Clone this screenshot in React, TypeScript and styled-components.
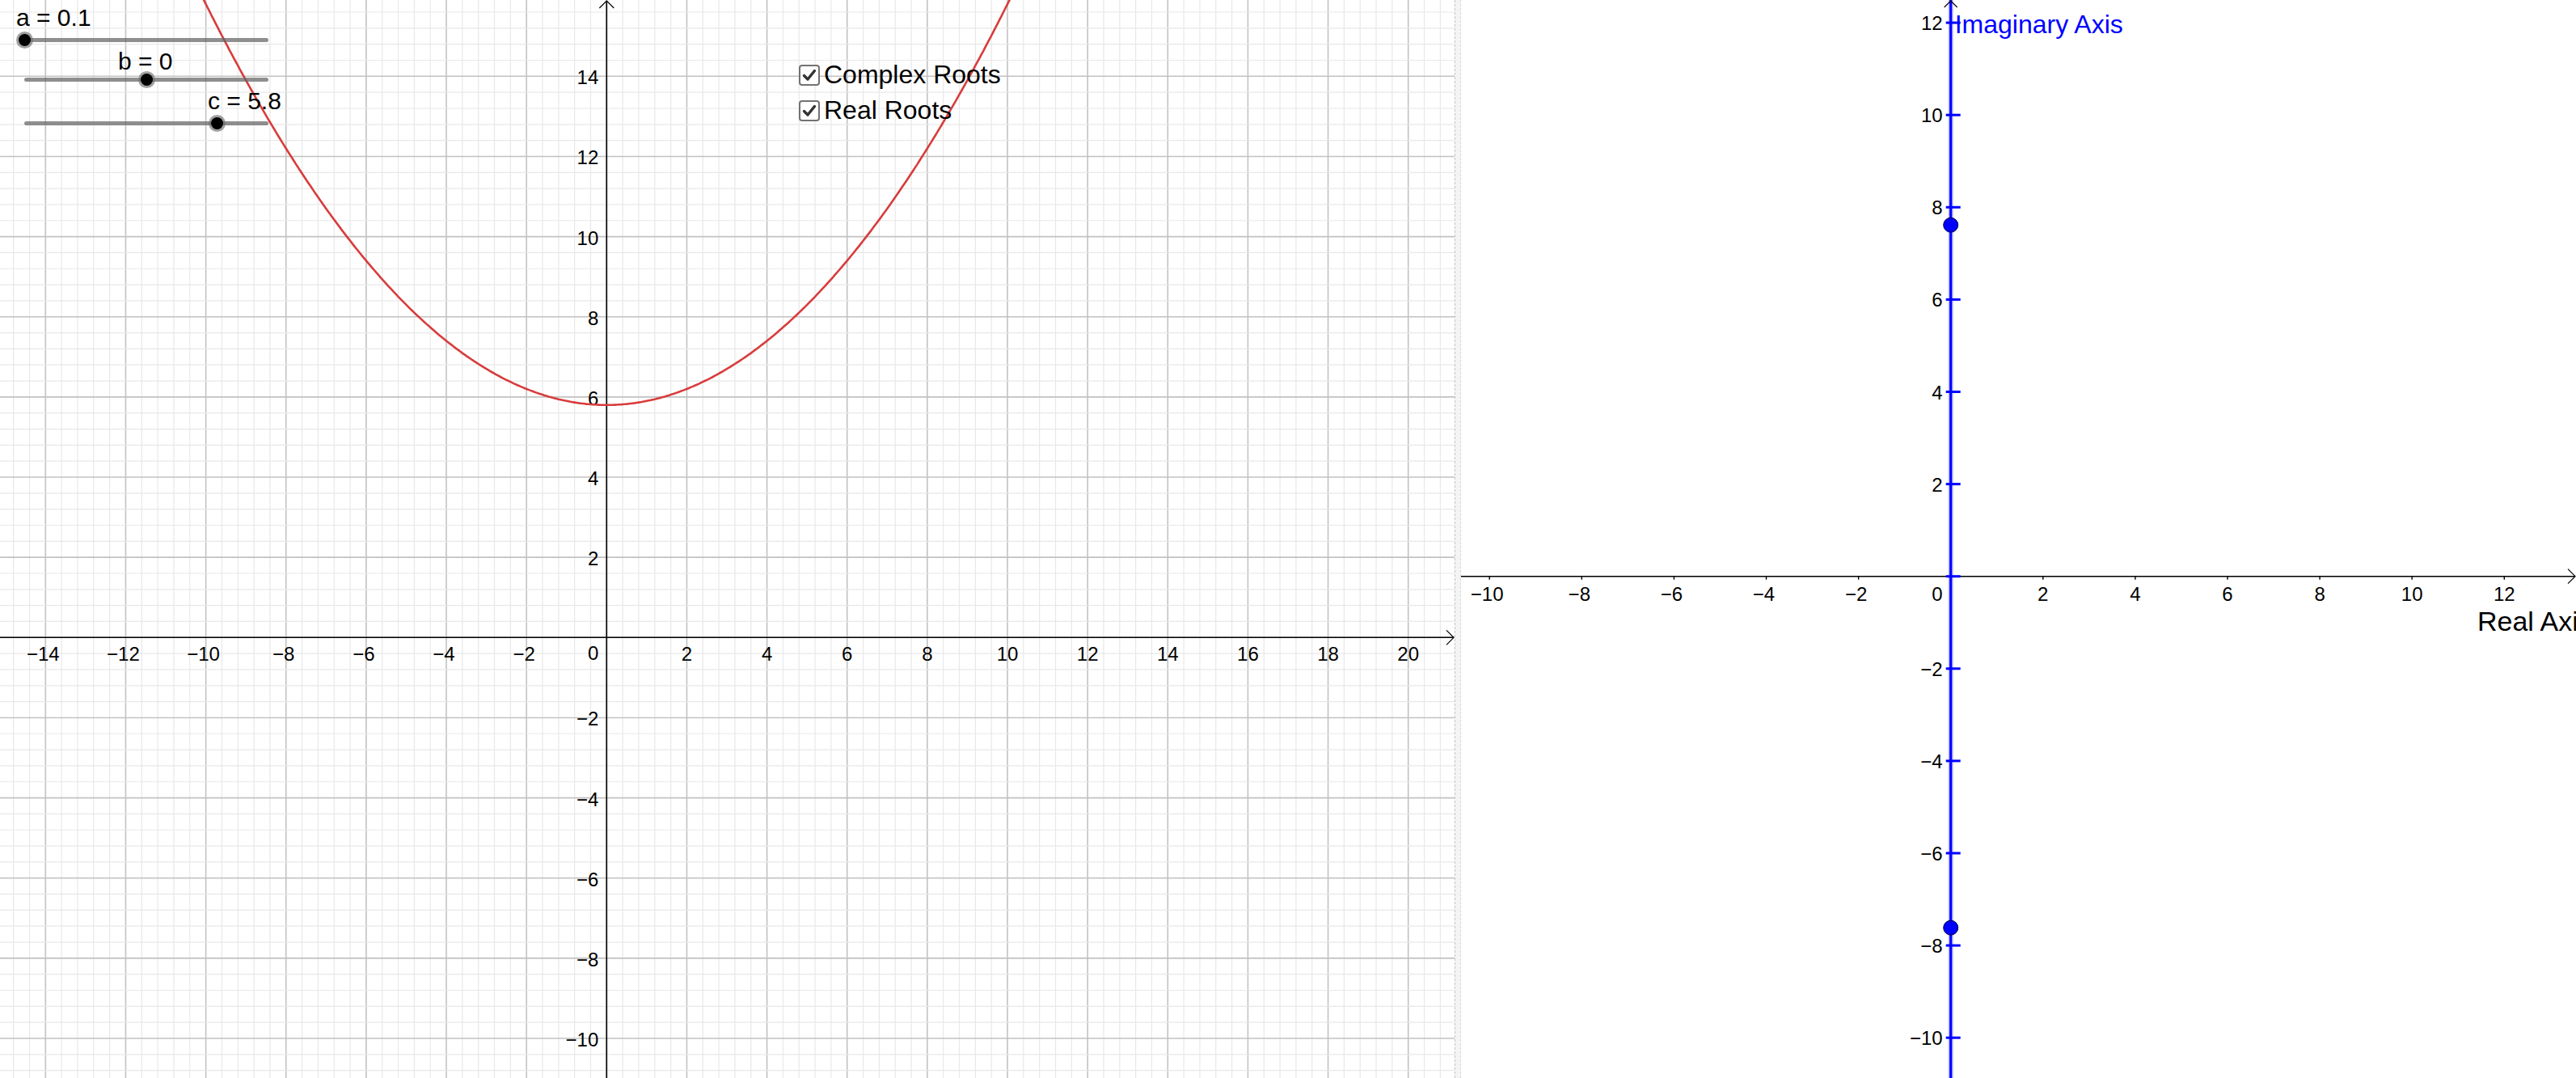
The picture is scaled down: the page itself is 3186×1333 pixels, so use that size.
import React from 'react';
import styled, { createGlobalStyle } from 'styled-components';

const GlobalStyle = createGlobalStyle`
  html, body {
    margin: 0;
    padding: 0;
    background: #fff;
  }
  body {
    font-family: "Liberation Sans", Arial, sans-serif;
    overflow: hidden;
  }
`;

const Page = styled.div`
  display: flex;
  width: 3186px;
  height: 1333px;
  overflow: hidden;
`;

const GraphPanel = styled.div<{ $width?: number }>`
  position: relative;
  flex: ${(p) => (p.$width ? `0 0 ${p.$width}px` : '1 1 auto')};
  height: 100%;
  overflow: hidden;
  background: #fff;
`;

const Divider = styled.div`
  flex: 0 0 6px;
  background: #f4f4f4;
  border-left: 1px dashed #c4c4c4;
  border-right: 1px dashed #d8d8d8;
`;

const Canvas = styled.svg`
  display: block;
  font-family: "Liberation Sans", Arial, sans-serif;
`;

const SliderWrap = styled.div<{ $top: number }>`
  position: absolute;
  left: 30px;
  top: ${(p) => p.$top - 2}px;
  width: 302px;
  height: 5px;
`;

const Track = styled.div`
  height: 5px;
  border-radius: 3px;
  background: rgba(100, 100, 100, 0.72);
`;

const Knob = styled.span`
  position: absolute;
  top: 50%;
  width: 21px;
  height: 21px;
  margin: -10.5px 0 0 -10.5px;
  border-radius: 50%;
  background: rgba(110, 110, 110, 0.65);

  &::after {
    content: '';
    position: absolute;
    inset: 3px;
    border-radius: 50%;
    background: #000;
  }
`;

const SliderLabel = styled.div<{ $left: number; $baseline: number }>`
  position: absolute;
  left: ${(p) => p.$left}px;
  top: ${(p) => p.$baseline - 26}px;
  font-size: 30px;
  line-height: 30px;
  color: #000;
  white-space: nowrap;
`;

const CheckList = styled.div`
  position: absolute;
  left: 988px;
  top: 79px;
  display: flex;
  flex-direction: column;
  gap: 17px;
`;

const CheckRow = styled.label`
  display: flex;
  align-items: center;
  gap: 5px;
  height: 27px;
  font-size: 32px;
  color: #000;
  white-space: nowrap;
`;

const CheckBox = styled.span`
  box-sizing: border-box;
  width: 26px;
  height: 26px;
  border: 2px solid #727272;
  border-radius: 4px;
  background: #fff;
  display: flex;
  align-items: center;
  justify-content: center;
`;

const L = { ox: 750.3, oy: 788.3, s: 49.57, w: 1799, h: 1333 };
const R = { ox: 605.7, oy: 712.7, s: 57.05, w: 1379, h: 1333 };

const fmt = (n: number) => (n < 0 ? `\u2212${Math.abs(n)}` : `${n}`);
const range = (a: number, b: number, step = 1) => {
  const out: number[] = [];
  for (let i = a; i <= b; i += step) out.push(i);
  return out;
};

const Slider: React.FC<{ top: number; value: number; min: number; max: number; label: string; labelX: number; labelY: number }> = ({
  top,
  value,
  min,
  max,
  label,
  labelX,
  labelY,
}) => (
  <>
    <SliderLabel $left={labelX} $baseline={labelY}>
      {label}
    </SliderLabel>
    <SliderWrap $top={top}>
      <Track />
      <Knob style={{ left: `${((value - min) / (max - min)) * 100}%` }} />
    </SliderWrap>
  </>
);

const Check: React.FC<{ label: string }> = ({ label }) => (
  <CheckRow>
    <CheckBox>
      <svg width="18" height="18" viewBox="0 0 18 18">
        <path d="M2.5 9.5 L7 14 L15.5 3.5" fill="none" stroke="#333" strokeWidth="3.4" strokeLinecap="round" strokeLinejoin="round" />
      </svg>
    </CheckBox>
    {label}
  </CheckRow>
);

const LeftGraph = () => {
  const minor = L.s * 0.4;
  const xs = range(Math.ceil(-L.ox / minor), Math.floor((L.w - L.ox) / minor));
  const ys = range(Math.ceil((L.oy - L.h) / minor), Math.floor(L.oy / minor));
  const pts: string[] = [];
  for (let x = -10.7; x <= 10.7; x += 0.05) {
    pts.push(`${(L.ox + x * L.s).toFixed(1)},${(L.oy - (0.1 * x * x + 5.8) * L.s).toFixed(1)}`);
  }
  return (
    <Canvas width={L.w} height={L.h}>
      {xs.map((k) => (
        <line
          key={`gx${k}`}
          x1={L.ox + k * minor}
          x2={L.ox + k * minor}
          y1={0}
          y2={L.h}
          stroke={k % 5 === 0 ? '#c2c2c2' : '#e8e8e8'}
          strokeWidth={k % 5 === 0 ? 1.6 : 1.2}
        />
      ))}
      {ys.map((k) => (
        <line
          key={`gy${k}`}
          y1={L.oy - k * minor}
          y2={L.oy - k * minor}
          x1={0}
          x2={L.w}
          stroke={k % 5 === 0 ? '#c2c2c2' : '#e8e8e8'}
          strokeWidth={k % 5 === 0 ? 1.6 : 1.2}
        />
      ))}
      <line x1={0} x2={L.w - 1} y1={L.oy} y2={L.oy} stroke="#000" strokeWidth={1.6} />
      <line x1={L.ox} x2={L.ox} y1={1} y2={L.h} stroke="#000" strokeWidth={1.6} />
      <polyline points={`${L.w - 10},${L.oy - 9} ${L.w - 1},${L.oy} ${L.w - 10},${L.oy + 9}`} fill="none" stroke="#000" strokeWidth={1.2} />
      <polyline points={`${L.ox - 9},${10} ${L.ox},${1} ${L.ox + 9},${10}`} fill="none" stroke="#000" strokeWidth={1.2} />
      <g fontSize={24} fill="#000">
        {range(-14, 20, 2)
          .filter((n) => n !== 0)
          .map((n) => (
            <text key={`lx${n}`} x={L.ox + n * L.s - (n < 0 ? 3 : 0)} y={L.oy + 29} textAnchor="middle">
              {fmt(n)}
            </text>
          ))}
        {range(-10, 14, 2)
          .filter((n) => n !== 0)
          .map((n) => (
            <text key={`ly${n}`} x={L.ox - 10} y={L.oy - n * L.s + 10} textAnchor="end">
              {fmt(n)}
            </text>
          ))}
        <text x={L.ox - 10} y={L.oy + 28} textAnchor="end">
          0
        </text>
      </g>
      <polyline points={pts.join(' ')} fill="none" stroke="#d83c3c" strokeWidth={2.6} />
    </Canvas>
  );
};

const RightGraph = () => {
  const root = Math.sqrt(58);
  return (
    <Canvas width={R.w} height={R.h}>
      <line x1={0} x2={R.w - 1} y1={R.oy} y2={R.oy} stroke="#000" strokeWidth={1.6} />
      <polyline points={`${R.w - 10},${R.oy - 9} ${R.w - 1},${R.oy} ${R.w - 10},${R.oy + 9}`} fill="none" stroke="#000" strokeWidth={1.2} />
      {range(-10, 12, 2).map((n) => (
        <line key={`tx${n}`} x1={R.ox + n * R.s} x2={R.ox + n * R.s} y1={R.oy} y2={R.oy + 4} stroke="#000" strokeWidth={1.4} />
      ))}
      <line x1={R.ox} x2={R.ox} y1={0} y2={R.h} stroke="#b8b8ff" strokeWidth={6} />
      <line x1={R.ox} x2={R.ox} y1={0} y2={R.h} stroke="#0000ff" strokeWidth={3} />
      {range(-10, 12, 2).map((n) => (
        <line key={`ty${n}`} x1={R.ox - 6} x2={R.ox + 12} y1={R.oy - n * R.s} y2={R.oy - n * R.s} stroke="#0000ff" strokeWidth={3} />
      ))}
      <polyline points={`${R.ox - 8},${9} ${R.ox},${1} ${R.ox + 8},${9}`} fill="none" stroke="#000" strokeWidth={1.2} />
      <g fontSize={24} fill="#000">
        {range(-10, 12, 2)
          .filter((n) => n !== 0)
          .map((n) => (
            <text key={`rx${n}`} x={R.ox + n * R.s - (n < 0 ? 3 : 0)} y={R.oy + 30} textAnchor="middle">
              {fmt(n)}
            </text>
          ))}
        {range(-10, 12, 2)
          .filter((n) => n !== 0)
          .map((n) => (
            <text key={`ry${n}`} x={R.ox - 10} y={R.oy - n * R.s + 9} textAnchor="end">
              {fmt(n)}
            </text>
          ))}
        <text x={R.ox - 10} y={R.oy + 30} textAnchor="end">
          0
        </text>
      </g>
      <text x={R.ox + 5} y={41} fontSize={32} fill="#0000ff">
        Imaginary Axis
      </text>
      <text x={1257} y={780} fontSize={34} fill="#000">
        Real Axis
      </text>
      <circle cx={R.ox} cy={R.oy - root * R.s} r={9} fill="#0000ff" stroke="#000040" strokeWidth={1} />
      <circle cx={R.ox} cy={R.oy + root * R.s} r={9} fill="#0000ff" stroke="#000040" strokeWidth={1} />
    </Canvas>
  );
};

export default function App() {
  return (
    <>
      <GlobalStyle />
      <Page>
        <GraphPanel $width={1799}>
          <LeftGraph />
          <Slider top={49} value={0.1} min={0.1} max={5} label="a = 0.1" labelX={20} labelY={33} />
          <Slider top={98} value={0} min={-5} max={5} label="b = 0" labelX={146} labelY={87} />
          <Slider top={152} value={5.8} min={-10} max={10} label="c = 5.8" labelX={257} labelY={136} />
          <CheckList>
            <Check label="Complex Roots" />
            <Check label="Real Roots" />
          </CheckList>
        </GraphPanel>
        <Divider />
        <GraphPanel>
          <RightGraph />
        </GraphPanel>
      </Page>
    </>
  );
}
